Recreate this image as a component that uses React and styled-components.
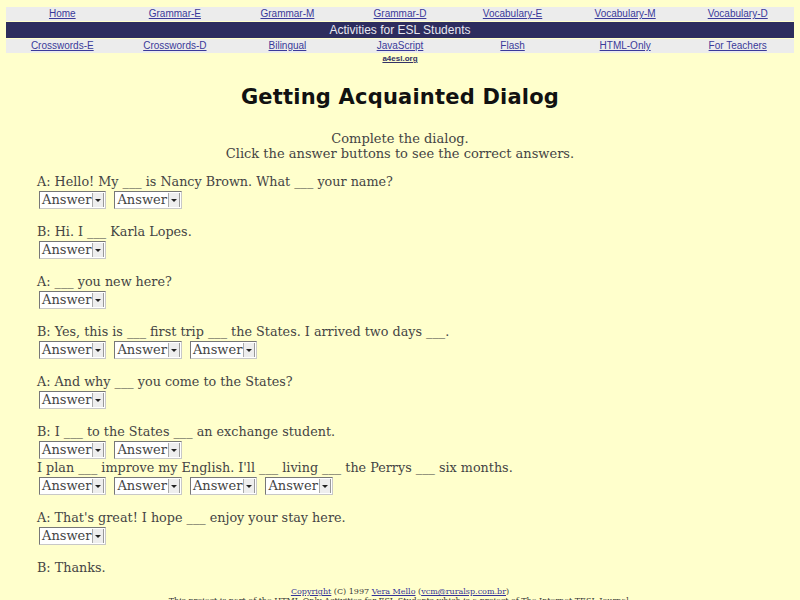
import React from "react";
import styled, { createGlobalStyle } from "styled-components";

const GlobalStyle = createGlobalStyle`
  html, body { margin: 0; padding: 0; background: #ffffcc; }
  body { font-family: "DejaVu Serif", serif; color: #444; }
`;

const Page = styled.div`
  padding: 7px 6px 0 6px;
  height: 600px;
  box-sizing: border-box;
  overflow: hidden;
`;

const NavRow = styled.div`
  display: grid;
  grid-template-columns: repeat(7, 1fr);
  background: #ececec;
  height: 14px;
  align-items: center;
`;

const NavLink = styled.a`
  font-family: "Liberation Sans", Arial, sans-serif;
  font-size: 10px;
  line-height: 14px;
  color: #3a3a9a;
  text-decoration: underline;
  text-align: center;
`;

const Banner = styled.div`
  background: #2d2d5e;
  color: #e8e8f0;
  font-family: "Liberation Sans", Arial, sans-serif;
  font-size: 12px;
  height: 16px;
  line-height: 16px;
  text-align: center;
  margin: 1px 0 1px;
`;

const SiteLink = styled.a`
  display: block;
  text-align: center;
  font-family: "Liberation Sans", Arial, sans-serif;
  font-size: 8px;
  font-weight: bold;
  line-height: 10px;
  margin-top: 1px;
  color: #333366;
  text-decoration: underline;
`;

const Title = styled.h1`
  font-family: "Comic Sans MS", "DejaVu Sans", sans-serif;
  font-weight: bold;
  font-size: 21px;
  color: #111;
  text-align: center;
  margin: 16px 0 0;
  line-height: 34px;
  letter-spacing: 0.2px;
`;

const Intro = styled.p`
  text-align: center;
  font-size: 13px;
  line-height: 15px;
  margin: 17px 0 0;
  color: #444;
`;

const Dialog = styled.div`
  padding: 12px 0 0 31px;
`;

const Block = styled.div`
  margin-bottom: 14px;
  &:last-child { margin-bottom: 0; }
`;

const Line = styled.div`
  font-size: 12.75px;
  line-height: 18px;
  white-space: nowrap;
`;

const Answers = styled.div`
  display: flex;
  gap: 8px;
  padding-left: 2px;
  height: 18px;
  align-items: flex-start;
`;

const Select = styled.span`
  display: inline-flex;
  align-items: center;
  height: 18px;
  box-sizing: border-box;
  background: #fff;
  border: 1px solid #c8c8c8;
  border-top-color: #777;
  border-left-color: #777;
  padding-left: 2px;
  font-size: 13px;
  color: #444;
`;

const SelectText = styled.span`
  line-height: 16px;
  padding-right: 1px;
`;

const Arrow = styled.span`
  width: 10px;
  height: 14px;
  margin-right: 1px;
  background: #eee;
  border-left: 1px solid #aaa;
  border-right: 1px solid #999;
  display: flex;
  align-items: center;
  justify-content: center;
  &::after {
    content: "";
    border-left: 3px solid transparent;
    border-right: 3px solid transparent;
    border-top: 3px solid #222;
  }
`;

const Footer = styled.div`
  text-align: center;
  font-family: "DejaVu Serif", serif;
  font-size: 8px;
  line-height: 9px;
  color: #333;
  margin-top: 10px;
`;

const FootLink = styled.a`
  color: #333399;
  text-decoration: underline;
`;

const top = ["Home", "Grammar-E", "Grammar-M", "Grammar-D", "Vocabulary-E", "Vocabulary-M", "Vocabulary-D"];
const bottom = ["Crosswords-E", "Crosswords-D", "Bilingual", "JavaScript", "Flash", "HTML-Only", "For Teachers"];

const AnswerBox = () => (
  <Select>
    <SelectText>Answer</SelectText>
    <Arrow />
  </Select>
);

const Row = ({ n }) => (
  <Answers>
    {Array.from({ length: n }).map((_, i) => (
      <AnswerBox key={i} />
    ))}
  </Answers>
);

export default function App() {
  return (
    <>
      <GlobalStyle />
      <Page>
        <NavRow>
          {top.map((t) => (
            <NavLink key={t} href="#">{t}</NavLink>
          ))}
        </NavRow>
        <Banner>Activities for ESL Students</Banner>
        <NavRow>
          {bottom.map((t) => (
            <NavLink key={t} href="#">{t}</NavLink>
          ))}
        </NavRow>
        <SiteLink href="#">a4esl.org</SiteLink>

        <Title>Getting Acquainted Dialog</Title>
        <Intro>
          Complete the dialog.
          <br />
          Click the answer buttons to see the correct answers.
        </Intro>

        <Dialog>
          <Block>
            <Line>A: Hello! My ___ is Nancy Brown. What ___ your name?</Line>
            <Row n={2} />
          </Block>
          <Block>
            <Line>B: Hi. I ___ Karla Lopes.</Line>
            <Row n={1} />
          </Block>
          <Block>
            <Line>A: ___ you new here?</Line>
            <Row n={1} />
          </Block>
          <Block>
            <Line>B: Yes, this is ___ first trip ___ the States. I arrived two days ___.</Line>
            <Row n={3} />
          </Block>
          <Block>
            <Line>A: And why ___ you come to the States?</Line>
            <Row n={1} />
          </Block>
          <Block>
            <Line>B: I ___ to the States ___ an exchange student.</Line>
            <Row n={2} />
            <Line>I plan ___ improve my English. I'll ___ living ___ the Perrys ___ six months.</Line>
            <Row n={4} />
          </Block>
          <Block>
            <Line>A: That's great! I hope ___ enjoy your stay here.</Line>
            <Row n={1} />
          </Block>
          <Block>
            <Line>B: Thanks.</Line>
          </Block>
        </Dialog>

        <Footer>
          <FootLink href="#">Copyright</FootLink> (C) 1997 <FootLink href="#">Vera Mello</FootLink> (<FootLink href="#">vcm@ruralsp.com.br</FootLink>)
          <br />
          This project is part of the HTML-Only Activities for ESL Students which is a project of The Internet TESL Journal.
        </Footer>
      </Page>
    </>
  );
}
